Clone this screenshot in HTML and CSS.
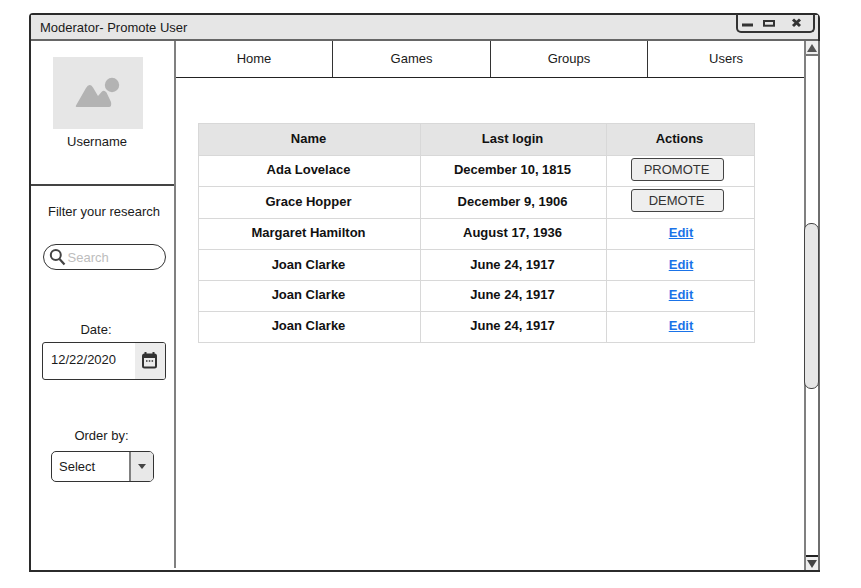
FILE: index.html
```html
<!DOCTYPE html>
<html lang="en">
<head>
<meta charset="utf-8">
<title>Moderator- Promote User</title>
<link rel="stylesheet" href="styles.css">
</head>
<body>
<div class="window">
  <header class="titlebar">
    <span class="title">Moderator- Promote User</span>
    <div class="controls">
      <svg class="ctl" width="72" height="18" viewBox="0 0 72 18">
        <rect x="4" y="9.500" width="11" height="3" fill="#333"/>
        <rect x="26" y="7" width="10" height="4.700" fill="none" stroke="#333" stroke-width="2"/>
        <path d="M55 5.500l7 6.500M62 5.500l-7 6.500" stroke="#333" stroke-width="3" fill="none"/>
      </svg>
    </div>
  </header>
  <div class="body">
    <aside class="side">
      <div class="profile">
        <div class="avatar">
          <svg width="46" height="32" viewBox="0 0 46 32">
            <circle cx="37" cy="8" r="7.200" fill="#b3b3b3"/>
            <path d="M1 28.500 L11 11 Q14.500 5.500 18 10.500 L23 19 L26.500 15 Q29 12.500 31.500 15.500 L36 25 Q37 30 34 30 L3 30 Q0 30 1 28.500Z" fill="#b3b3b3"/>
          </svg>
        </div>
        <div class="username">Username</div>
      </div>
      <div class="filters">
        <div class="filter-title">Filter your research</div>
        <div class="search">
          <svg width="17" height="18" viewBox="0 0 17 18"><circle cx="6.800" cy="7" r="5" fill="none" stroke="#444" stroke-width="2"/><path d="M10.500 11l5 5.500" stroke="#444" stroke-width="2.200"/></svg>
          <span class="placeholder">Search</span>
        </div>
        <div class="date-label">Date:</div>
        <div class="date">
          <span class="date-value">12/22/2020</span>
          <span class="date-btn">
            <svg width="15" height="17" viewBox="0 0 15 17"><path d="M3.500 0v3M11.500 0v3" stroke="#333" stroke-width="2"/><rect x="1" y="2.500" width="13" height="13" rx="1.500" fill="none" stroke="#333" stroke-width="2"/><rect x="1" y="2.500" width="13" height="3.500" fill="#333"/><path d="M4 9h1.500M6.800 9h1.500M9.600 9h1.500" stroke="#333" stroke-width="1.500"/></svg>
          </span>
        </div>
        <div class="order-label">Order by:</div>
        <div class="select">
          <span class="select-value">Select</span>
          <span class="select-btn"><i class="caret"></i></span>
        </div>
      </div>
    </aside>
    <main class="main">
      <nav class="nav">
        <a class="tab">Home</a>
        <a class="tab">Games</a>
        <a class="tab">Groups</a>
        <a class="tab">Users</a>
      </nav>
      <div class="content">
        <table class="grid">
          <colgroup><col class="c1"><col class="c2"><col class="c3"></colgroup>
          <thead>
            <tr class="r-head"><th>Name</th><th>Last login</th><th>Actions</th></tr>
          </thead>
          <tbody>
            <tr class="r-a"><td>Ada Lovelace</td><td>December 10, 1815</td><td><button class="btn">PROMOTE</button></td></tr>
            <tr class="r-b"><td>Grace Hopper</td><td>December 9, 1906</td><td class="cell-btn"><button class="btn">DEMOTE</button></td></tr>
            <tr class="r-a"><td>Margaret Hamilton</td><td>August 17, 1936</td><td><a class="edit">Edit</a></td></tr>
            <tr class="r-c"><td>Joan Clarke</td><td>June 24, 1917</td><td><a class="edit">Edit</a></td></tr>
            <tr class="r-a"><td>Joan Clarke</td><td>June 24, 1917</td><td><a class="edit">Edit</a></td></tr>
            <tr class="r-a"><td>Joan Clarke</td><td>June 24, 1917</td><td><a class="edit">Edit</a></td></tr>
          </tbody>
        </table>
      </div>
    </main>
    <div class="scrollbar">
      <span class="sb-btn"><i class="tri-up"></i></span>
      <div class="track"><div class="thumb"></div></div>
      <span class="sb-btn sb-down"><i class="tri-down"></i></span>
    </div>
  </div>
</div>
</body>
</html>
```
FILE: styles.css
```css
* { box-sizing: border-box; }
html, body { margin: 0; height: 100%; background: #fff; }
body {
  padding: 13px 41px 16px 29px;
  font-family: "Liberation Sans", Arial, sans-serif;
  font-size: 13px;
  color: #1a1a1a;
  overflow: hidden;
}
.window {
  width: 791px;
  height: 559px;
  border: 2px solid #2b2b2b;
  border-radius: 4px 5px 0 0;
  display: flex;
  flex-direction: column;
  background: #fff;
}
.titlebar {
  height: 26px;
  flex: none;
  background: #e6e6e6;
  border-bottom: 2px solid #666;
  display: flex;
  align-items: flex-start;
  justify-content: space-between;
}
.title { padding: 5px 0 0 9px; line-height: 16px; }
.controls {
  width: 79px;
  height: 19px;
  margin-right: 3px;
  margin-top: -1px;
  border: 2px solid #333;
  border-top: 0;
  border-radius: 0 0 5px 5px;
}
.ctl { display: block; }
.body { flex: 1; display: flex; min-height: 0; }
.side {
  width: 145px;
  flex: none;
  display: flex;
  flex-direction: column;
  margin-bottom: 2px;
  border-right: 2px solid #808080;
}
.profile {
  height: 145px;
  flex: none;
  border-bottom: 2px solid #444;
  padding: 16px 0 0 22px;
  display: flex;
  flex-direction: column;
  align-items: flex-start;
}
.avatar {
  width: 90px;
  height: 72px;
  background: #e6e6e6;
  display: flex;
  align-items: center;
  justify-content: center;
}
.username { margin: 5px 0 0 14px; line-height: 16px; }
.filters { flex: 1; display: flex; flex-direction: column; align-items: center; }
.filter-title { margin: 18px 0 0 3px; line-height: 16px; }
.search {
  width: 123px;
  height: 26px;
  margin: 24px 0 0 3px;
  border: 1px solid #333;
  border-radius: 13px;
  display: flex;
  align-items: center;
  gap: 2px;
  padding: 0 0 0 5px;
}
.placeholder { color: #bdbdbd; }
.date-label { margin: 52px 0 0 -13px; line-height: 16px; }
.date {
  width: 124px;
  height: 38px;
  margin: 4px 0 0 3px;
  border: 1px solid #333;
  border-radius: 3px;
  display: flex;
  overflow: hidden;
}
.date-value { flex: 1; padding-left: 8px; line-height: 34px; }
.date-btn {
  width: 30px;
  padding: 0 2px 2px 0;
  background: #ececec;
  display: flex;
  align-items: center;
  justify-content: center;
}
.order-label { margin: 48px 0 0 -2px; line-height: 16px; }
.select {
  width: 103px;
  height: 31px;
  margin: 7px 0 0 0;
  border: 1px solid #333;
  border-radius: 5px;
  display: flex;
  overflow: hidden;
}
.select-value { flex: 1; padding-left: 7px; line-height: 30px; }
.select-btn {
  width: 24px;
  background: #e8e8e8;
  border-left: 2px solid #808080;
  display: flex;
  align-items: center;
  justify-content: center;
}
.caret { width: 0; height: 0; border: 4.500px solid transparent; border-top: 5px solid #444; border-bottom: 0; }
.main { flex: 1; min-width: 0; display: flex; flex-direction: column; }
.nav {
  height: 37px;
  flex: none;
  display: grid;
  grid-template-columns: 157px 158px 157px 1fr;
  border-bottom: 1px solid #222;
}
.tab {
  display: flex;
  align-items: center;
  justify-content: center;
  padding-bottom: 2px;
  border-right: 1px solid #333;
}
.tab:last-child { border-right: 0; }
.content { padding: 45px 0 0 22px; }
.grid {
  width: 556px;
  table-layout: fixed;
  border-collapse: collapse;
  font-weight: bold;
  color: #111;
  text-align: center;
}
.c1 { width: 222px; }
.c2 { width: 186px; }
.c3 { width: 148px; }
.grid th, .grid td { border: 1px solid #d8d8d8; padding: 0 2px 0 0; }
.grid th { background: #e4e4e4; padding-bottom: 2px; }
.r-head { height: 32px; }
.r-a { height: 31px; }
.r-b { height: 32px; }
.r-c { height: 31px; }
.grid .r-a td { padding-bottom: 4px; }
.grid .r-b td, .grid .r-c td { padding-bottom: 2px; }
.grid .r-b .cell-btn { padding-bottom: 4px; }
.btn {
  width: 93px;
  height: 23px;
  padding: 0 2px 0 0;
  display: inline-block;
  vertical-align: middle;
  margin: 0 0 0 -4px;
  background: #eeeeee;
  border: 1px solid #444;
  border-radius: 3px;
  font: 13px "Liberation Sans", Arial, sans-serif;
  color: #333;
}
.edit { color: #1a73e8; text-decoration: underline; margin-left: 3px; }
.scrollbar {
  width: 16px;
  margin-right: -2px;
  flex: none;
  display: flex;
  flex-direction: column;
  border-left: 2px solid #808080;
  border-right: 2px solid #6e6e6e;
}
.sb-btn {
  height: 15px;
  flex: none;
  background: #eeeeee;
  border-bottom: 2px solid #777;
  display: flex;
  align-items: center;
  justify-content: center;
}
.sb-down { border-bottom: 0; border-top: 2px solid #222; }
.tri-up { width: 0; height: 0; border: 5px solid transparent; border-bottom: 8px solid #555; border-top: 0; }
.tri-down { width: 0; height: 0; border: 5px solid transparent; border-top: 8px solid #444; border-bottom: 0; }
.track { flex: 1; padding-top: 167px; }
.thumb {
  width: 15px;
  height: 166px;
  margin-left: -2px;
  background: #e6e6e6;
  border: 1px solid #444;
  border-radius: 7px;
  position: relative;
}
```
